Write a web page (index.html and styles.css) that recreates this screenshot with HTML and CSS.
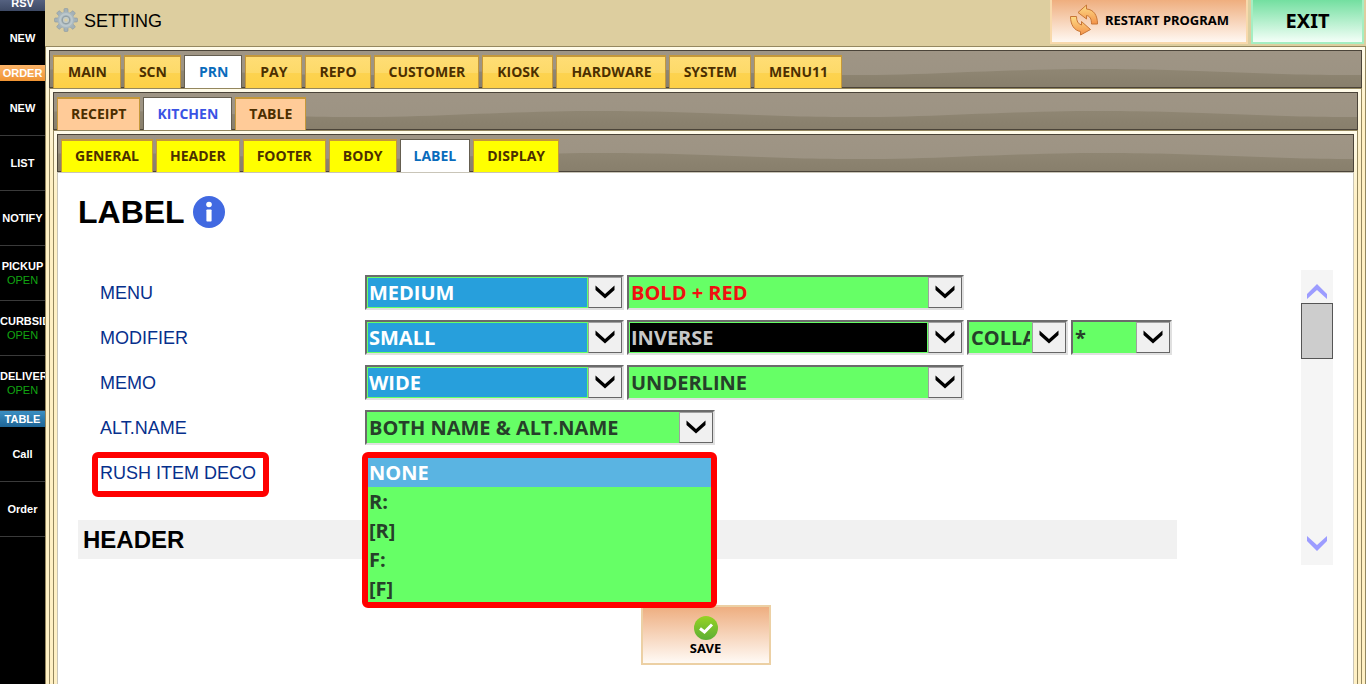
FILE: index.html
```html
<!DOCTYPE html>
<html lang="en">

<head>
    <meta charset="UTF-8">
    <meta name="viewport" content="width=device-width, initial-scale=1.0">
    <title>Setting</title>
    <link rel="stylesheet" href="styles.css">
</head>

<body>
    <!-- Order sidebar -->
    <nav class="sidebar">
        <div class="side-title rsv">RSV</div>
        <a href="#" class="side-item last">NEW</a>
        <div class="side-title order">ORDER</div>
        <a href="#" class="side-item">NEW</a>
        <a href="#" class="side-item">LIST</a>
        <a href="#" class="side-item">NOTIFY</a>
        <a href="#" class="side-item">PICKUP<span class="open">OPEN</span></a>
        <a href="#" class="side-item">CURBSIDE<span class="open">OPEN</span></a>
        <a href="#" class="side-item">DELIVERY<span class="open">OPEN</span></a>
        <div class="side-title table">TABLE</div>
        <a href="#" class="side-item">Call</a>
        <a href="#" class="side-item">Order</a>
    </nav>

    <div class="app">
        <header class="topbar">
            <svg class="gear" viewBox="0 0 24 24" width="24" height="24">
                <g fill="#a3b1b8" stroke="#8b999f" stroke-width="0.6">
                    <rect x="10" y="0.5" width="4" height="23" rx="1" />
                    <rect x="10" y="0.5" width="4" height="23" rx="1" transform="rotate(45 12 12)" />
                    <rect x="10" y="0.5" width="4" height="23" rx="1" transform="rotate(90 12 12)" />
                    <rect x="10" y="0.5" width="4" height="23" rx="1" transform="rotate(135 12 12)" />
                </g>
                <circle cx="12" cy="12" r="8.6" fill="#a9b7bd" />
                <circle cx="12" cy="12" r="6" fill="none" stroke="#bcc8cc" stroke-width="2" />
                <circle cx="12" cy="12" r="3.8" fill="#c3cbc8" stroke="#8c9ba2" />
                <circle cx="12" cy="12" r="1.6" fill="#ddcf9f" />
            </svg>
            <span class="page-name">SETTING</span>
            <button type="button" class="restart">
                <svg viewBox="0 0 30 32" width="30" height="32">
                    <defs>
                        <linearGradient id="arrowFill" x1="0" y1="0" x2="0" y2="1">
                            <stop offset="0" stop-color="#fddc86" />
                            <stop offset="1" stop-color="#f4934a" />
                        </linearGradient>
                    </defs>
                    <g fill="url(#arrowFill)" stroke="#c87636" stroke-width="1" stroke-linejoin="round">
                        <path d="M9 8.500L17.500 1V5C24.500 5.500 28.500 11 28.500 20H22.500C22.500 15 21 12 17.500 11.500V15Z" />
                        <path d="M21.500 25.500L11.500 31V27.500C5 26.500 1.500 20.500 1.500 12.500H7.500C7.500 17 9 20 12.500 21V17.500Z" />
                    </g>
                </svg>
                RESTART PROGRAM
            </button>
            <button type="button" class="exit">EXIT</button>
        </header>

        <div class="panel">
            <nav class="tabs tabs-main">
                <a href="#">MAIN</a>
                <a href="#">SCN</a>
                <a href="#" class="active">PRN</a>
                <a href="#">PAY</a>
                <a href="#">REPO</a>
                <a href="#">CUSTOMER</a>
                <a href="#">KIOSK</a>
                <a href="#">HARDWARE</a>
                <a href="#">SYSTEM</a>
                <a href="#">MENU11</a>
            </nav>

            <div class="panel">
                <nav class="tabs tabs-prn">
                    <a href="#">RECEIPT</a>
                    <a href="#" class="active">KITCHEN</a>
                    <a href="#">TABLE</a>
                </nav>

                <div class="panel">
                    <nav class="tabs tabs-kitchen">
                        <a href="#">GENERAL</a>
                        <a href="#">HEADER</a>
                        <a href="#">FOOTER</a>
                        <a href="#">BODY</a>
                        <a href="#" class="active">LABEL</a>
                        <a href="#">DISPLAY</a>
                    </nav>

                    <main class="content">
                        <h1>LABEL
                            <svg viewBox="0 0 32 32" width="32" height="32">
                                <circle cx="16" cy="16" r="16" fill="#4169e1" />
                                <circle cx="16" cy="8.500" r="2.800" fill="#fff" />
                                <rect x="13.400" y="13.500" width="5.200" height="12" rx="0.800" fill="#fff" />
                            </svg>
                        </h1>

                        <div class="scroll-area">
                            <form class="settings" id="labelForm">
                                <div class="row">
                                    <label for="menuSize">MENU</label>
                                    <span class="drop size blue"><select id="menuSize"><option>MEDIUM</option></select><span class="arrow"><svg viewBox="0 0 20 14"><path d="M0.500 0.500L10 9L19.500 0.500V5L10 13.500L0.500 5Z" /></svg></span></span>
                                    <span class="drop deco red"><select aria-label="Menu style"><option>BOLD + RED</option></select><span class="arrow"><svg viewBox="0 0 20 14"><path d="M0.500 0.500L10 9L19.500 0.500V5L10 13.500L0.500 5Z" /></svg></span></span>
                                </div>
                                <div class="row">
                                    <label for="modSize">MODIFIER</label>
                                    <span class="drop size blue"><select id="modSize"><option>SMALL</option></select><span class="arrow"><svg viewBox="0 0 20 14"><path d="M0.500 0.500L10 9L19.500 0.500V5L10 13.500L0.500 5Z" /></svg></span></span>
                                    <span class="drop deco black"><select aria-label="Modifier style"><option>INVERSE</option></select><span class="arrow"><svg viewBox="0 0 20 14"><path d="M0.500 0.500L10 9L19.500 0.500V5L10 13.500L0.500 5Z" /></svg></span></span>
                                    <span class="drop short"><select aria-label="Modifier layout"><option>COLLAPSE</option></select><span class="arrow"><svg viewBox="0 0 20 14"><path d="M0.500 0.500L10 9L19.500 0.500V5L10 13.500L0.500 5Z" /></svg></span></span>
                                    <span class="drop short"><select aria-label="Modifier mark"><option>*</option></select><span class="arrow"><svg viewBox="0 0 20 14"><path d="M0.500 0.500L10 9L19.500 0.500V5L10 13.500L0.500 5Z" /></svg></span></span>
                                </div>
                                <div class="row">
                                    <label for="memoSize">MEMO</label>
                                    <span class="drop size blue"><select id="memoSize"><option>WIDE</option></select><span class="arrow"><svg viewBox="0 0 20 14"><path d="M0.500 0.500L10 9L19.500 0.500V5L10 13.500L0.500 5Z" /></svg></span></span>
                                    <span class="drop deco"><select aria-label="Memo style"><option>UNDERLINE</option></select><span class="arrow"><svg viewBox="0 0 20 14"><path d="M0.500 0.500L10 9L19.500 0.500V5L10 13.500L0.500 5Z" /></svg></span></span>
                                </div>
                                <div class="row">
                                    <label for="altName">ALT.NAME</label>
                                    <span class="drop alt"><select id="altName"><option>BOTH NAME &amp; ALT.NAME</option></select><span class="arrow"><svg viewBox="0 0 20 14"><path d="M0.500 0.500L10 9L19.500 0.500V5L10 13.500L0.500 5Z" /></svg></span></span>
                                </div>
                                <div class="row">
                                    <label for="rushDeco"><span class="marked">RUSH ITEM DECO</span></label>
                                    <div class="open-list">
                                        <select id="rushDeco" size="5">
                                            <option selected>NONE</option>
                                            <option>R:</option>
                                            <option>[R]</option>
                                            <option>F:</option>
                                            <option>[F]</option>
                                        </select>
                                    </div>
                                </div>
                                <h2>HEADER</h2>
                            </form>
                            <div class="scrollbar">
                                <button type="button" aria-label="Scroll up"><svg viewBox="0 0 20 15"><path d="M0 10L10 0L20 10V15L10 6L0 15Z" /></svg></button>
                                <div class="thumb"></div>
                                <button type="button" class="down" aria-label="Scroll down"><svg viewBox="0 0 20 15"><path d="M0 0L10 9L20 0V5L10 15L0 5Z" /></svg></button>
                            </div>
                        </div>

                        <button type="submit" form="labelForm" class="save">
                            <svg viewBox="0 0 24 24" width="24" height="24">
                                <defs>
                                    <linearGradient id="okFill" x1="0" y1="0" x2="0" y2="1">
                                        <stop offset="0" stop-color="#96d324" />
                                        <stop offset="1" stop-color="#5cae34" />
                                    </linearGradient>
                                </defs>
                                <circle cx="12" cy="12" r="12" fill="url(#okFill)" />
                                <path d="M6 12.500L10.500 16L18 8.500" fill="none" stroke="#fff" stroke-width="3" />
                            </svg>
                            SAVE
                        </button>
                    </main>
                </div>
            </div>
        </div>
    </div>
</body>

</html>
```
FILE: styles.css
```css
* {
    box-sizing: border-box;
}

body {
    margin: 0;
    display: flex;
    min-height: 100vh;
    overflow: hidden;
    background-color: #fff;
    font-family: "Liberation Sans", Arial, sans-serif;
}

a {
    text-decoration: none;
}

button {
    margin: 0;
    padding: 0;
    font-family: "Noto Sans", sans-serif;
    font-weight: bold;
    color: #000;
    cursor: pointer;
}

/* Sidebar */
.sidebar {
    width: 45px;
    flex: none;
    background-color: #000;
    overflow: hidden;
}

.side-title {
    height: 16px;
    line-height: 16px;
    font-size: 11px;
    font-weight: bold;
    text-align: center;
    color: #fff;
}

.rsv {
    margin-top: -5px;
    background: linear-gradient(#5f6c8c, #3d4964);
}

.order {
    background: linear-gradient(#fbb469, #f09433);
}

.table {
    background: linear-gradient(#3b8fc2, #1f6596);
}

.side-item {
    display: flex;
    flex-direction: column;
    align-items: safe center;
    justify-content: center;
    height: 55px;
    border-bottom: 1px solid #3a3a3a;
    font-size: 11px;
    line-height: 14px;
    font-weight: bold;
    color: #fff;
}

.side-item.last {
    height: 54px;
    border-bottom: none;
}

.open {
    font-weight: normal;
    color: #12a512;
}

/* Top bar */
.app {
    flex: 1;
    min-width: 0;
    display: flex;
    flex-direction: column;
}

.topbar {
    display: flex;
    align-items: flex-start;
    height: 46px;
    padding-right: 2px;
    background-color: #ddce9f;
}

.gear {
    margin: 8px 6px 0 9px;
}

.page-name {
    flex: 1;
    font-size: 18px;
    line-height: 42px;
}

.restart,
.exit {
    height: 44px;
    border: 2px solid #f8d9ab;
    border-top: none;
    background: linear-gradient(#efae7e, #fff8f2);
}

.restart {
    display: flex;
    align-items: center;
    justify-content: center;
    gap: 6px;
    width: 198px;
    padding-bottom: 2px;
    font-size: 13px;
}

.exit {
    width: 113px;
    margin-left: 3px;
    padding-bottom: 2px;
    border-color: #a5eec2;
    background: linear-gradient(#73dfa0, #f4fff8);
    font-size: 20px;
}

/* Nested tab panels */
.panel {
    flex: 1;
    display: flex;
    flex-direction: column;
    padding: 3px 3px 0;
    border: 1px solid #94875f;
    border-bottom: none;
    background: linear-gradient(#fffbe9, #fff0c4 70px);
}

.tabs {
    display: flex;
    gap: 3px;
    height: 38px;
    padding: 4px 3px 0;
    border: 1px solid #4b4439;
    background: url("data:image/svg+xml,%3Csvg xmlns='http://www.w3.org/2000/svg' width='500' height='38'%3E%3Cdefs%3E%3ClinearGradient id='a' x1='0' y1='0' x2='0' y2='1'%3E%3Cstop offset='0' stop-color='%239f9585'/%3E%3Cstop offset='1' stop-color='%239b9282'/%3E%3C/linearGradient%3E%3ClinearGradient id='b' x1='0' y1='0' x2='0' y2='1'%3E%3Cstop offset='0' stop-color='%238f8673'/%3E%3Cstop offset='1' stop-color='%23877e6b'/%3E%3C/linearGradient%3E%3C/defs%3E%3Crect width='500' height='38' fill='url(%23a)'/%3E%3Cpath d='M-203 24C-100 24 -60 18 47 18S200 24 297 24S440 18 547 18V38H-203Z' fill='url(%23b)'/%3E%3C/svg%3E") repeat-x;
}

.tabs a {
    height: 33px;
    padding: 0 13px;
    border: 1px solid #c5983a;
    border-top-width: 2px;
    border-bottom: none;
    font-family: "Open Sans", sans-serif;
    font-size: 14px;
    line-height: 30px;
    font-weight: bold;
    color: #4c2f00;
}

.tabs-main a {
    padding: 0 13px 0 14px;
    background: linear-gradient(#ffdd75, #fdda69 50%, #fdd350 51%, #fdd045);
}

.tabs-prn a {
    background-color: #ffcb98;
}

.tabs-kitchen a {
    background-color: #ff0;
}

.tabs a.active {
    height: 34px;
    border: 1px solid #655e50;
    border-bottom: none;
    background: #fff;
    color: #0a6cbc;
    line-height: 32px;
}

.tabs-prn a.active {
    color: #3a53e4;
}

/* Label settings */
.content {
    flex: 1;
    padding: 0 20px;
    border: 1px solid #c9c5b8;
    border-bottom: none;
    background-color: #fff;
}

h1 {
    display: flex;
    align-items: center;
    gap: 8px;
    height: 78px;
    margin: 0 0 19px;
    font-size: 32px;
}

.scroll-area {
    display: flex;
    height: 295px;
}

.settings {
    flex: 1;
    margin-right: 124px;
}

.row {
    position: relative;
    display: flex;
    align-items: center;
    gap: 3px;
    height: 45px;
    padding-left: 22px;
}

.row label {
    width: 262px;
    padding-top: 2px;
    font-size: 18px;
    line-height: 21px;
    color: #06308c;
}

.marked {
    display: inline-block;
    margin: -12px -8px;
    padding: 5px 7px 7px 2px;
    border: 6px solid #f00;
    border-radius: 6px;
}

.drop {
    display: flex;
    height: 35px;
    border: 2px solid #6b6b6b;
    border-right-color: #e0e0e0;
    border-bottom-color: #e0e0e0;
    background-color: #66ff66;
}

.drop select,
.open-list select {
    appearance: none;
    margin: 0;
    border: none;
    border-radius: 0;
    outline: none;
    background-color: #66ff66;
    font-family: "Open Sans", sans-serif;
    font-size: 20px;
    font-weight: bold;
    color: #26402a;
}

.drop select {
    flex: 1;
    min-width: 0;
    padding: 0 2px;
}

.size {
    width: 259px;
}

.deco {
    width: 337px;
}

.short {
    width: 101px;
}

.alt {
    width: 350px;
}

.drop.blue select {
    margin: 1px;
    padding: 0 1px;
    background-color: #279fdc;
    color: #fff;
}

.drop.red select {
    color: #f01010;
}

.drop.black select {
    margin: 1px;
    padding: 0 1px;
    background-color: #000;
    color: #c8c8c8;
}

.arrow {
    display: flex;
    align-items: center;
    justify-content: center;
    width: 34px;
    padding-bottom: 2px;
    border: 1px solid #a0a0a0;
    border-right-color: #666;
    border-bottom-color: #666;
    background-color: #f0f0f0;
    pointer-events: none;
}

.arrow svg {
    width: 20px;
    height: 14px;
}

.open-list {
    position: absolute;
    top: 2px;
    left: 284px;
    z-index: 2;
    width: 355px;
    border: 6px solid #f00;
    border-radius: 6px;
    background-color: #66ff66;
}

.open-list select {
    display: block;
    width: 100%;
    height: 144px;
    padding: 0;
    overflow: hidden;
}

.open-list option {
    height: 29px;
    min-height: 0;
    padding: 1px 1px 0;
    font-weight: bold;
    line-height: 28px;
}

.open-list option:checked {
    background: linear-gradient(#5ab4e2, #5ab4e2);
    color: #fff;
}

h2 {
    height: 39px;
    margin: 25px 0 0;
    padding-left: 5px;
    background-color: #f1f1f1;
    font-size: 24px;
    line-height: 39px;
}

.scrollbar {
    display: flex;
    flex-direction: column;
    width: 32px;
    background-color: #f5f5f5;
}

.scrollbar button {
    height: 33px;
    padding-top: 10px;
    border: none;
    background: none;
    line-height: 0;
}

.scrollbar .down {
    height: 43px;
    margin-top: auto;
    padding-top: 0;
}

.scrollbar svg {
    width: 20px;
    height: 15px;
    fill: #9c9cff;
}

.thumb {
    height: 56px;
    border: 1px solid #555;
    background-color: #cdcdcd;
}

.save {
    display: flex;
    flex-direction: column;
    align-items: center;
    justify-content: center;
    width: 130px;
    height: 60px;
    margin: 40px auto 0;
    padding-top: 2px;
    border: 2px solid #ecd0a4;
    background: linear-gradient(#eeae80, #fffaf5);
    font-size: 13px;
    line-height: 16px;
}
```
